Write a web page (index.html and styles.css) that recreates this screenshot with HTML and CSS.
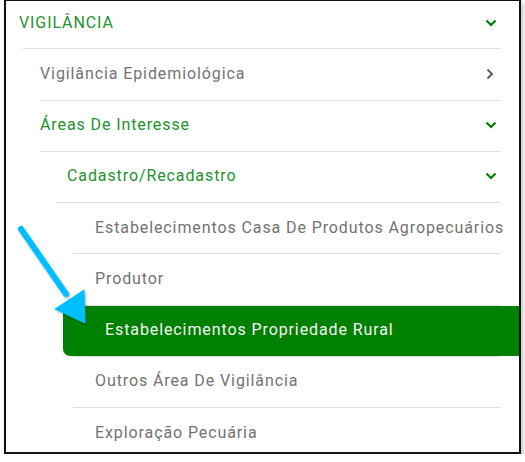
FILE: index.html
```html
<!DOCTYPE html>
<html lang="pt-BR">
<head>
  <meta charset="UTF-8" />
  <meta name="viewport" content="width=device-width, initial-scale=1" />
  <title>Menu Vigilância</title>
  <link rel="stylesheet" href="styles.css">
</head>
<body>
  <div class="frame">
    <!-- Side menu, flattened: rows and their separators -->
    <ul class="menu">
      <li class="row row-top open">
        <span class="label">VIGILÂNCIA</span>
        <svg class="chev" viewBox="0 0 12 8"><path d="M1.5 1.5 6 6 10.5 1.5" /></svg>
      </li>
      <li class="sep sep-1"></li>

      <li class="row lvl-1">
        <span class="label">Vigilância Epidemiológica</span>
        <svg class="chev chev-right" viewBox="0 0 8 12"><path d="M1.5 1.5 6 6 1.5 10.5" /></svg>
      </li>
      <li class="sep sep-2"></li>

      <li class="row lvl-1 open">
        <span class="label">Áreas De Interesse</span>
        <svg class="chev" viewBox="0 0 12 8"><path d="M1.5 1.5 6 6 10.5 1.5" /></svg>
      </li>
      <li class="sep sep-2"></li>

      <li class="row lvl-2 open">
        <span class="label">Cadastro/Recadastro</span>
        <svg class="chev" viewBox="0 0 12 8"><path d="M1.5 1.5 6 6 10.5 1.5" /></svg>
      </li>
      <li class="sep sep-3"></li>

      <li class="row lvl-3">
        <span class="label">Estabelecimentos Casa De Produtos Agropecuários</span>
      </li>
      <li class="sep sep-4"></li>

      <li class="row lvl-3">
        <span class="label">Produtor</span>
      </li>
      <li class="sep sep-4"></li>

      <li class="row lvl-3 active">
        <span class="label">Estabelecimentos Propriedade Rural</span>
      </li>
      <li class="sep sep-4"></li>

      <li class="row lvl-3">
        <span class="label">Outros Área De Vigilância</span>
      </li>
      <li class="sep sep-4"></li>

      <li class="row lvl-3">
        <span class="label">Exploração Pecuária</span>
      </li>
    </ul>

    <!-- Callout arrow pointing at the selected item -->
    <svg class="callout" width="100" height="110" viewBox="0 0 100 110">
      <defs>
        <filter id="drop" x="-20%" y="-20%" width="140%" height="140%">
          <feDropShadow dx="1" dy="1.5" stdDeviation="1.2" flood-color="#000" flood-opacity="0.3" />
        </filter>
      </defs>
      <g filter="url(#drop)" fill="#00bfff" stroke="#00bfff">
        <line x1="17" y1="5" x2="62" y2="70" stroke-width="6" stroke-linecap="round" />
        <polygon points="51,85 80,66 81,99" stroke-width="1" stroke-linejoin="round" />
      </g>
    </svg>
  </div>
</body>
</html>
```

FILE: styles.css
```css
/* Base */
body {
  margin: 0;
  background: #fff;
  font-family: Roboto, 'Liberation Sans', Arial, sans-serif;
}
/* Screenshot frame with a soft shadow */
.frame {
  position: relative;
  box-sizing: border-box;
  width: 517px;
  height: 454px;
  margin-left: 4px;
  border: 2px solid #111;
  border-top-width: 1px;
  background: #fff;
  overflow: hidden;
  box-shadow: 2px 3px 5px rgba(0, 0, 0, 0.25);
}
/* Menu list */
.menu {
  list-style: none;
  margin: 0;
  padding: 0;
}
.row {
  display: flex;
  align-items: center;
  height: 50.25px;
  margin-right: 19px;
  padding-right: 3px;
  box-sizing: border-box;
  font-size: 16px;
  letter-spacing: 0.9px;
  color: #737373;
}
.row .label {
  flex: 1;
  white-space: nowrap;
  margin-top: -2px;
}
.row.open {
  color: #23922f;
}
.row-top {
  margin-top: -3px;
  padding-left: 13px;
}
.lvl-1 {
  padding-left: 34px;
}
.lvl-2 {
  padding-left: 61px;
}
.lvl-3 {
  padding-left: 89px;
}
/* Selected item */
.row.active {
  margin-left: 57px;
  margin-right: 0;
  padding-left: 42px;
  background: #008000;
  color: #f4f4f4;
  border-bottom-left-radius: 7px;
}
/* Chevrons */
.chev {
  width: 12px;
  height: 8px;
  fill: none;
  stroke: #008000;
  stroke-width: 2.2;
  margin-top: -1px;
}
.chev-right {
  width: 8px;
  height: 12px;
  margin-right: 3px;
  stroke: #555;
  stroke-width: 1.8;
}
/* Separators */
.sep {
  height: 1px;
  margin-right: 19px;
  background: #ddd;
}
.sep-1 { margin-left: 17px; }
.sep-2 { margin-left: 34px; }
.sep-3 { margin-left: 50px; }
.sep-4 { margin-left: 67px; }
/* Overlay arrow */
.callout {
  position: absolute;
  left: -2px;
  top: 223px;
}
```
